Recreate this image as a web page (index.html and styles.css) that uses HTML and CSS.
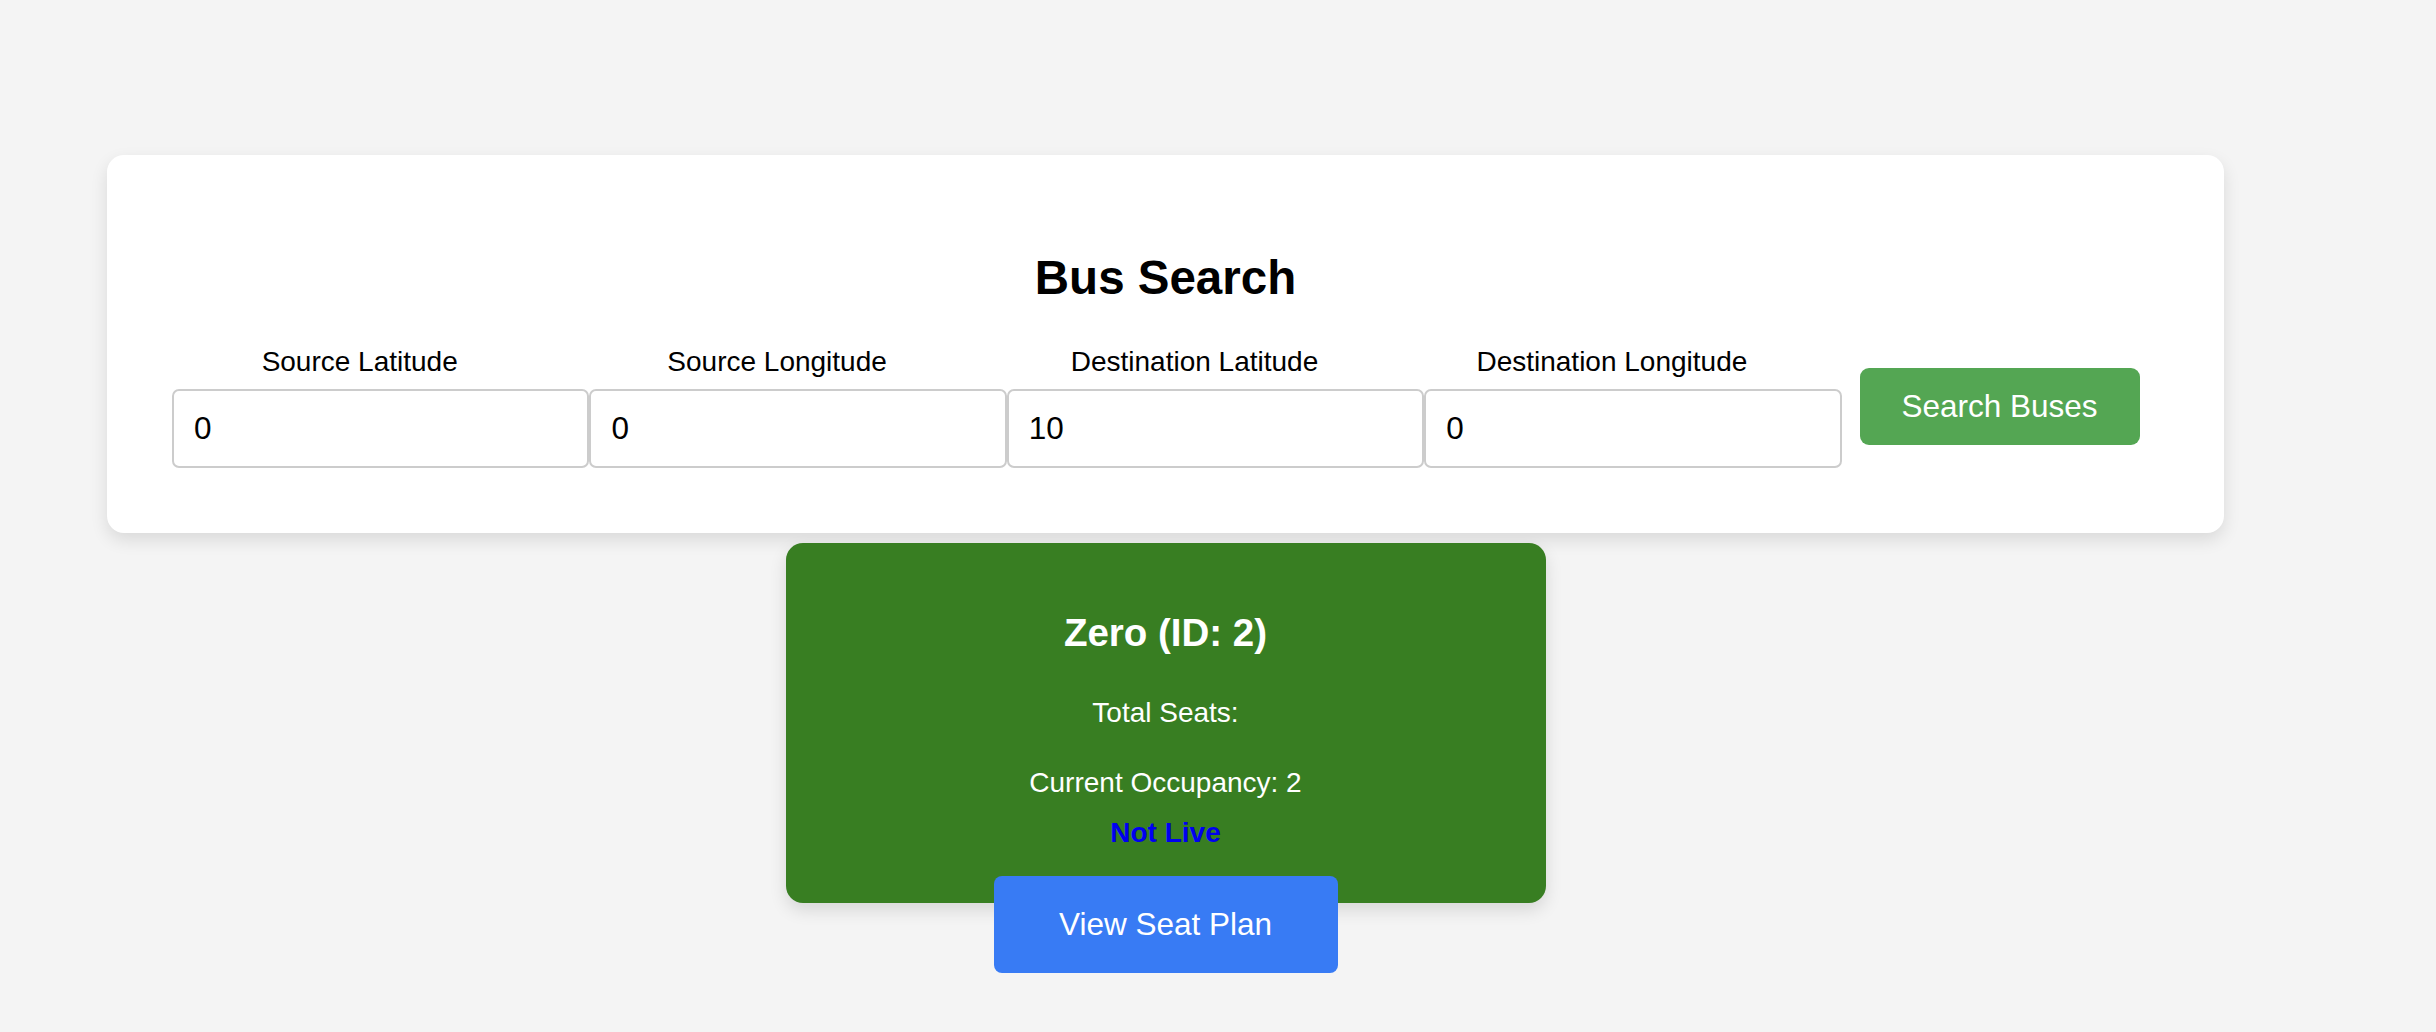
FILE: index.html
```html
<!DOCTYPE html>
<html lang="en">
<head>
<meta charset="utf-8">
<title>Bus Search</title>
<link rel="stylesheet" href="styles.css">
</head>
<body>
<div class="page">
  <section class="search-card">
    <h2 class="search-title">Bus Search</h2>
    <form class="search-form">
      <div class="field">
        <label class="field-label">Source Latitude</label>
        <input class="field-input" type="text" value="0">
      </div>
      <div class="field">
        <label class="field-label">Source Longitude</label>
        <input class="field-input" type="text" value="0">
      </div>
      <div class="field">
        <label class="field-label">Destination Latitude</label>
        <input class="field-input" type="text" value="10">
      </div>
      <div class="field">
        <label class="field-label">Destination Longitude</label>
        <input class="field-input" type="text" value="0">
      </div>
      <button class="search-btn" type="button">Search Buses</button>
    </form>
  </section>

  <section class="bus-result">
    <div class="bus-card">
      <h3 class="bus-name">Zero (ID: 2)</h3>
      <p class="bus-seats">Total Seats: </p>
      <p class="bus-occupancy">Current Occupancy: 2</p>
      <p class="bus-status">Not Live</p>
    </div>
    <button class="seat-btn" type="button">View Seat Plan</button>
  </section>
</div>
</body>
</html>
```

FILE: styles.css
```css
html, body {
  margin: 0;
  padding: 0;
  background: #f4f4f4;
  font-family: "Liberation Sans", Arial, sans-serif;
  color: #000;
}

.page {
  width: 2331px;
  padding-top: 155px;
  padding-bottom: 59px;
  display: flex;
  flex-direction: column;
  align-items: center;
}

.search-card {
  box-sizing: border-box;
  width: 2117px;
  background: #fff;
  border-radius: 17px;
  box-shadow: 0 7px 17px rgba(0, 0, 0, 0.11);
  padding: 96px 65px 65px 65px;
}

.search-title {
  margin: 0;
  text-align: center;
  font-size: 47.5px;
  font-weight: bold;
  line-height: 1.149;
}

.search-form {
  margin-top: 40px;
  display: flex;
  align-items: center;
}

.field {
  display: flex;
  flex-direction: column;
  width: 417.4px;
}

.field-label {
  font-size: 28px;
  line-height: 1.149;
  text-align: center;
  padding-right: 42px;
  margin-bottom: 11px;
}

.field-input {
  box-sizing: border-box;
  width: 417.4px;
  height: 79px;
  margin: 0;
  padding: 0 20px;
  border: 2px solid #cccccc;
  border-radius: 7px;
  background: #fff;
  font-family: "Liberation Sans", Arial, sans-serif;
  font-size: 31.5px;
  color: #000;
  outline: none;
}

.search-btn {
  margin-left: 18px;
  width: 280px;
  height: 77px;
  border: none;
  border-radius: 9px;
  background: #54a653;
  color: #fff;
  font-family: "Liberation Sans", Arial, sans-serif;
  font-size: 31.5px;
  padding: 0;
}

.bus-result {
  margin-top: 10px;
  width: 760px;
}

.bus-card {
  box-sizing: border-box;
  height: 360px;
  background: #387e22;
  border-radius: 17px;
  box-shadow: 0 7px 17px rgba(0, 0, 0, 0.12);
  padding-top: 68px;
  color: #fff;
  text-align: center;
}

.bus-name {
  margin: 0;
  font-size: 38.5px;
  font-weight: bold;
  line-height: 1.12;
}

.bus-seats {
  margin: 43px 0 0 0;
  font-size: 28px;
  line-height: 1.149;
}

.bus-occupancy {
  margin: 38px 0 0 0;
  font-size: 28px;
  line-height: 1.149;
}

.bus-status {
  margin: 18px 0 0 0;
  font-size: 28px;
  font-weight: bold;
  line-height: 1.149;
  color: #0000f0;
}

.seat-btn {
  display: block;
  margin: -27px auto 0 auto;
  width: 344px;
  height: 97px;
  border: none;
  border-radius: 8px;
  background: #387bf4;
  color: #fff;
  font-family: "Liberation Sans", Arial, sans-serif;
  font-size: 31.5px;
  padding: 0;
}
```
